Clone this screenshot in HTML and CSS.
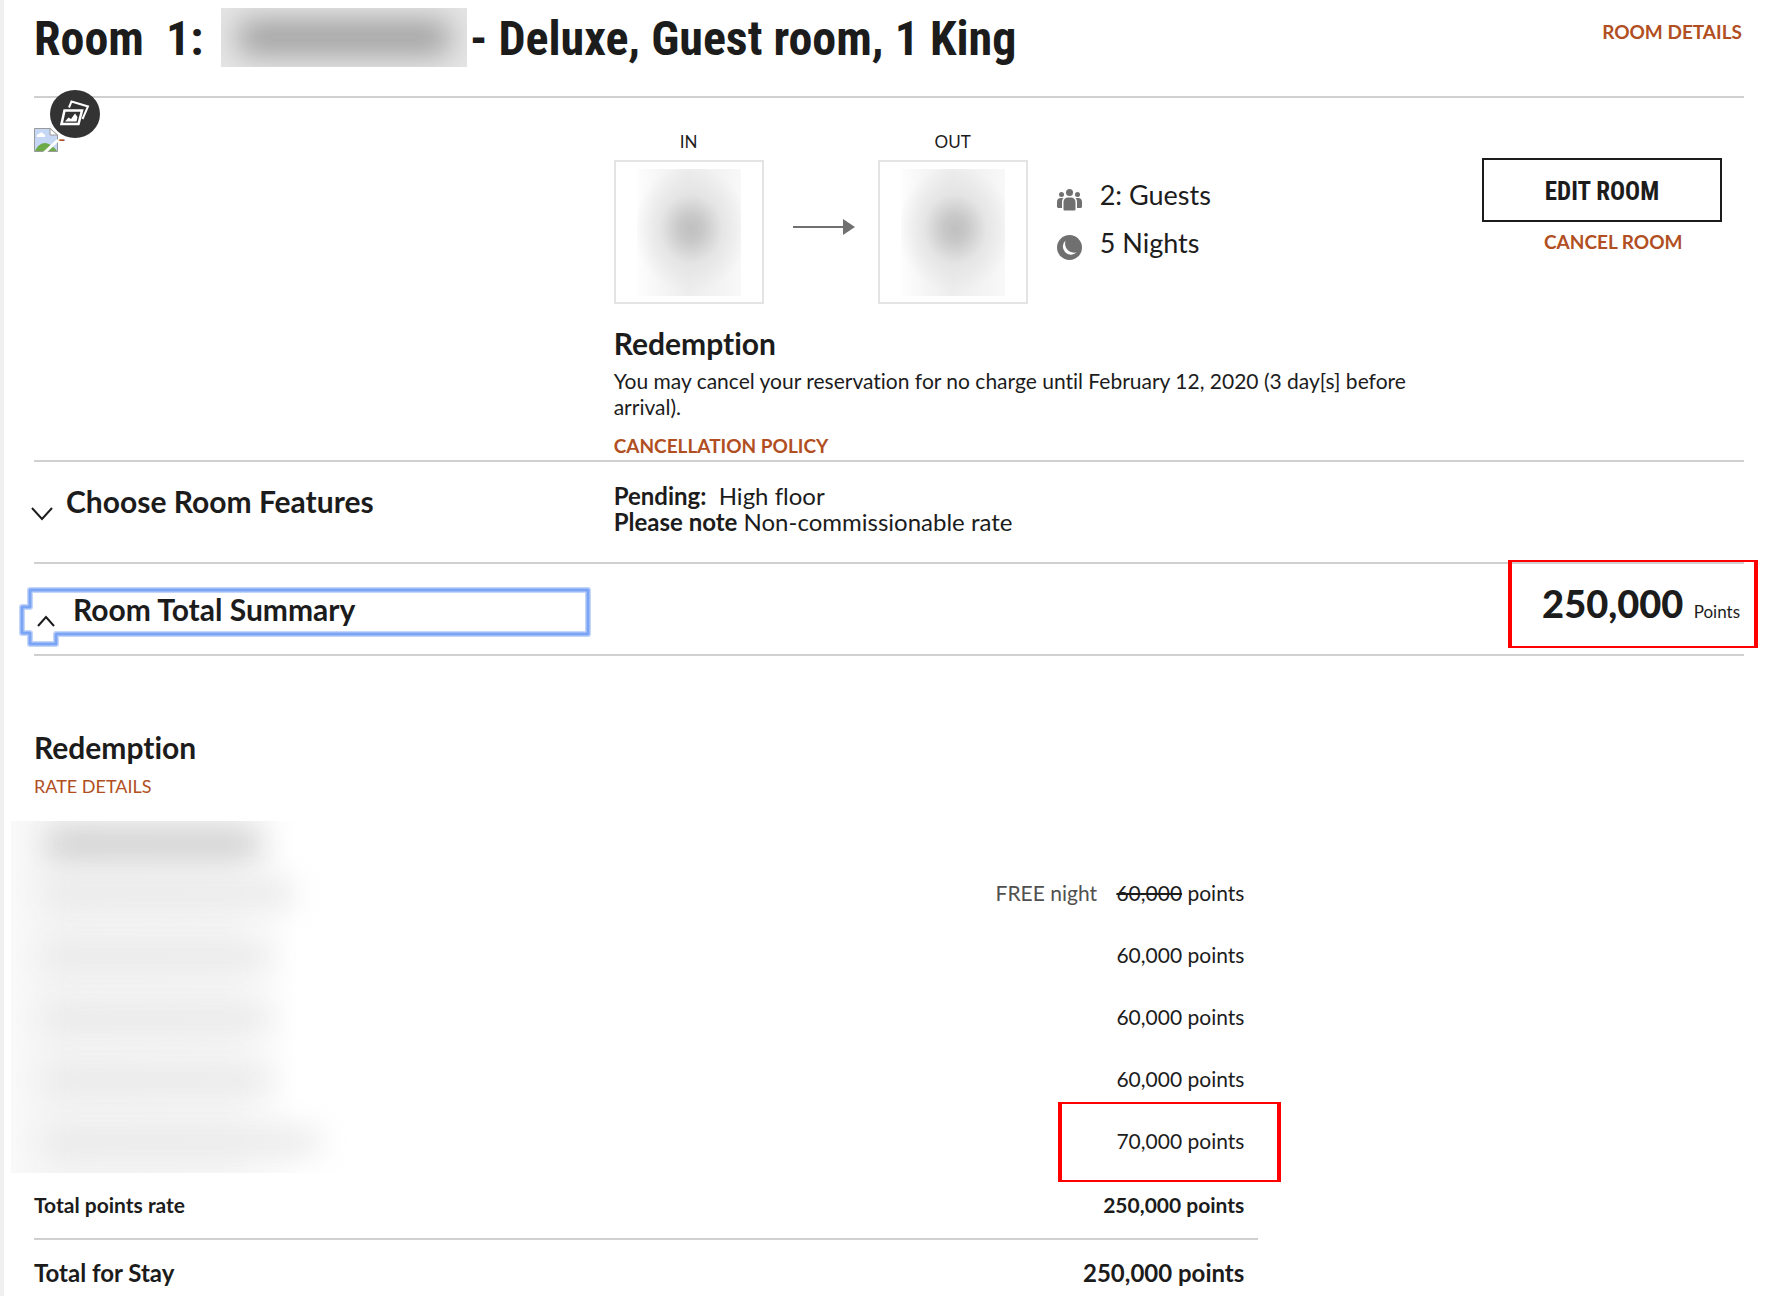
FILE: index.html
```
<!DOCTYPE html>
<html lang="en">
<head>
	<meta charset="utf-8">
	<title>Room 1</title>
	<link rel="stylesheet" href="styles.css">
</head>
<body>
<main class="page">

	<header class="room-header">
		<h1 class="room-title">
			<span class="room-num">Room  1:</span>
			<span class="hidden-name"></span>
			<span>- Deluxe, Guest room, 1 King</span>
		</h1>
		<a class="link" href="#">ROOM DETAILS</a>
	</header>

	<section class="room">
		<div class="photo">
			<svg class="broken" viewBox="0 0 24 24">
				<path d="M.5.5H16L23.500 7V23.500H.5z" fill="#c6d7f5" stroke="#9a9a9a"/>
				<path d="M16 .5V7h7.500z" fill="#fff" stroke="#9a9a9a"/>
				<path d="M3 9a2 2 0 0 1 2-3 2.500 2.500 0 0 1 4.500 0A2 2 0 0 1 11 9z" fill="#fff"/>
				<path d="M1 23c2-5 6-8 10-8s9 4 12 8z" fill="#6dab48"/>
				<path d="M10 25 24 12" stroke="#fff" stroke-width="3"/>
			</svg>
			<a class="photo-dash" href="#">-</a>
			<button class="gallery" aria-label="Photos">
				<svg viewBox="0 0 30 28" fill="none" stroke="#fff" stroke-width="2">
					<path d="M9 7.500l2.500-6L28 6.500 22.500 19"/>
					<path d="M4.500 10.500H22L18.500 24H1.500z" stroke-width="2.500"/>
					<path d="M5 21.500l3.500-4 2.500 1.500 4-5.500 2.500 3.500-1 4.500z" fill="#fff" stroke="none"/>
				</svg>
			</button>
		</div>

		<div class="stay">
			<div class="dates">
				<div class="date">
					<span class="date-label">IN</span>
					<div class="date-box"><div class="date-blur"></div></div>
				</div>
				<svg class="arrow" viewBox="0 0 62 16">
					<path d="M0 8h52" stroke="#707070" stroke-width="2"/>
					<path d="M50 0l12 8-12 8z" fill="#707070"/>
				</svg>
				<div class="date">
					<span class="date-label">OUT</span>
					<div class="date-box"><div class="date-blur"></div></div>
				</div>
				<ul class="counts">
					<li>
						<svg viewBox="0 0 25 25" fill="#707070">
							<circle cx="12.500" cy="5.500" r="3.500"/>
							<circle cx="4.500" cy="7.500" r="2.500"/>
							<circle cx="20.500" cy="7.500" r="2.500"/>
							<path d="M6.500 22.500V15a4.500 4.500 0 0 1 4.500-4.500h3a4.500 4.500 0 0 1 4.500 4.500v7.500a1 1 0 0 1-1 1h-10a1 1 0 0 1-1-1z"/>
							<path d="M5.500 11H4a4 4 0 0 0-4 4v5l1 1h4v-6c0-1.500.5-3 1.500-4zM19.500 11H21a4 4 0 0 1 4 4v5l-1 1h-4v-6c0-1.500-.5-3-1.500-4z"/>
						</svg>
						2: Guests
					</li>
					<li>
						<svg viewBox="0 0 25 25">
							<circle cx="12.500" cy="12.500" r="12.500" fill="#707070"/>
							<path d="M8.500 5.500c-2 8 4 13 11 12A8 8 0 1 1 8.500 5.500z" fill="#fff"/>
						</svg>
						5 Nights
					</li>
				</ul>
			</div>
			<h2>Redemption</h2>
			<p>You may cancel your reservation for no charge until February 12, 2020 (3 day[s] before arrival).</p>
			<a class="link" href="#">CANCELLATION POLICY</a>
		</div>

		<div class="actions">
			<button class="edit">EDIT ROOM</button>
			<a class="link" href="#">CANCEL ROOM</a>
		</div>
	</section>

	<section class="row features">
		<button class="toggle">
			<svg class="chevron" viewBox="0 0 22 14"><path d="M1 1l10 11L21 1"/></svg>
			Choose Room Features
		</button>
		<div class="notes">
			<div><b>Pending:</b>&nbsp; High floor</div>
			<div><b>Please note</b> Non-commissionable rate</div>
		</div>
	</section>

	<section class="row summary">
		<button class="toggle open">
			<svg class="focus" viewBox="0 0 576 64">
				<path class="halo" d="M13 5H571V49H39V59H13V48H5V22H13z"/>
				<path d="M13 5H571V49H39V59H13V48H5V22H13z"/>
			</svg>
			<svg class="chevron" viewBox="0 0 22 14"><path d="M3 11l8-9 8 9"/></svg>
			Room Total Summary
		</button>
		<div class="total"><strong>250,000</strong> <span>Points</span></div>
		<div class="mark mark-total"></div>
	</section>

	<section class="rates">
		<h2>Redemption</h2>
		<a class="link light" href="#">RATE DETAILS</a>
		<div class="nights">
			<table>
				<tr class="hotel"><th></th><td></td></tr>
				<tr><th></th><td><span class="free">FREE night</span> <s>60,000</s> points</td></tr>
				<tr><th></th><td>60,000 points</td></tr>
				<tr><th></th><td>60,000 points</td></tr>
				<tr><th></th><td>60,000 points</td></tr>
				<tr><th></th><td>70,000 points<div class="mark mark-night"></div></td></tr>
				<tr class="points"><th>Total points rate</th><td>250,000 points</td></tr>
				<tr class="grand"><th>Total for Stay</th><td>250,000 points</td></tr>
			</table>
			<!-- hidden hotel name and night labels -->
			<div class="redacted">
				<i class="name"></i>
				<i class="long"></i>
				<i></i>
				<i></i>
				<i></i>
				<i class="longest"></i>
			</div>
		</div>
	</section>

</main>
</body>
</html>
```

FILE: styles.css
```
* {
	box-sizing: border-box;
}
body {
	margin: 0;
	color: #1c1c1c;
	font-family: Lato, "Liberation Sans", sans-serif;
	font-size: 21px;
	line-height: 26px;
	font-variant-ligatures: none;
}
h1, h2, p, ul {
	margin: 0;
	padding: 0;
}
h2 {
	font-size: 30px;
	line-height: 36px;
	font-weight: 700;
}
button {
	font-family: inherit;
	color: inherit;
	background: none;
	border: 0;
	padding: 0;
}
.page {
	min-height: 100vh;
	padding: 0 22px 0 30px;
	border-left: 4px solid #f0f0f0;
	overflow: hidden;
}
.link {
	color: #b14f22;
	font-size: 19px;
	font-weight: 700;
	text-decoration: none;
}
.light {
	font-size: 18px;
	font-weight: 400;
}

/* header */
.room-header {
	display: flex;
	justify-content: space-between;
	align-items: flex-start;
	height: 98px;
	border-bottom: 2px solid #d0d0d0;
}
.room-header .link {
	padding: 19px 2px 0 0;
}
.room-title {
	display: flex;
	align-items: center;
	font-family: "Roboto Condensed", "Liberation Sans Narrow", sans-serif;
	font-size: 48px;
	line-height: 78px;
	white-space: pre;
}
.room-num {
	width: 187px;
}
.hidden-name {
	width: 246px;
	height: 59px;
	margin: 0 3px 4px 0;
	background: #e6e6e6;
	overflow: hidden;
}
.hidden-name::before {
	content: "";
	display: block;
	height: 33px;
	margin: 13px 18px;
	background: #9c9c9c;
	filter: blur(15px);
}

/* room block */
.room {
	display: grid;
	grid-template-columns: 33.9% 1fr 262px;
	border-bottom: 2px solid #d0d0d0;
	padding-bottom: 1px;
}
.photo {
	display: flex;
	align-items: flex-start;
	position: relative;
	padding-top: 30px;
}
.broken {
	width: 24px;
	height: 24px;
}
.photo-dash {
	color: #b14f22;
	text-decoration: none;
	line-height: 22px;
}
.gallery {
	position: absolute;
	left: 16px;
	top: -8px;
	width: 50px;
	height: 48px;
	border-radius: 50%;
	background: #333;
}
.gallery svg {
	width: 30px;
	height: 28px;
	display: block;
	margin: auto;
}
.stay {
	padding: 31px 24px 0 0;
}
.dates {
	display: flex;
	margin-bottom: 21px;
}
.date {
	width: 150px;
	text-align: center;
}
.date-label {
	display: block;
	font-size: 17px;
	margin-bottom: 5px;
}
.date-box {
	height: 144px;
	padding: 7px 21px;
	border: 2px solid #e4e4e4;
}
.date-blur {
	height: 127px;
	background: radial-gradient(ellipse 55% 50% at 52% 47%, #c0c0c0 0, #c8c8c8 20%, rgba(226,226,226,.8) 55%, rgba(240,240,240,0) 100%), linear-gradient(90deg, #fdfdfd, #ededed 50%, #f8f8f8);
}
.arrow {
	width: 62px;
	height: 16px;
	margin: 90px 23px 0 29px;
}
.counts {
	list-style: none;
	margin: 42px 0 0 29px;
	font-size: 27px;
	line-height: 48px;
}
.counts li {
	display: flex;
	align-items: center;
	gap: 18px;
}
.counts svg {
	width: 25px;
	height: 25px;
	margin-top: 8px;
}
.stay p {
	margin: 7px 0 13px;
}
.stay .link {
	display: block;
}
.actions {
	padding: 60px 22px 0 0;
}
.edit {
	width: 100%;
	height: 64px;
	padding-top: 2px;
	border: 2px solid #1c1c1c;
	font: bold 25px "Roboto Condensed", "Liberation Sans Narrow", sans-serif;
}
.actions .link {
	display: block;
	padding: 7px 0 0 62px;
}

/* expandable rows */
.row {
	display: flex;
	position: relative;
	padding-top: 21px;
	border-bottom: 2px solid #d0d0d0;
}
.toggle {
	display: flex;
	flex: 0 0 33.9%;
	position: relative;
	font-size: 30px;
	font-weight: 700;
	line-height: 36px;
	text-align: left;
}
.chevron {
	width: 22px;
	height: 14px;
	margin: 24px 13px 0 -3px;
	fill: none;
	stroke: #1c1c1c;
	stroke-width: 2;
}
.features {
	height: 102px;
	align-items: flex-start;
}
.notes {
	font-size: 24px;
}
.summary {
	height: 92px;
	justify-content: space-between;
	align-items: flex-start;
}
.open {
	margin-top: 6px;
	padding-left: 4px;
	outline: none;
}
.open .chevron {
	margin-right: 16px;
}
.focus {
	position: absolute;
	left: -17px;
	top: -6px;
	width: 576px;
	height: 64px;
	fill: none;
	stroke: #7ba4f4;
	stroke-width: 3;
	stroke-linejoin: round;
}
.focus .halo {
	stroke: #c3d6fa;
	stroke-width: 6;
}
.total {
	padding-right: 4px;
	font-size: 17px;
	line-height: 36px;
}
.total strong {
	font-size: 38px;
	font-weight: 900;
	margin-right: 6px;
}

/* red highlight boxes */
.mark {
	position: absolute;
	border: solid #f00;
	border-width: 2px 4px;
}
.mark-total {
	top: -4px;
	right: -14px;
	width: 250px;
	height: 88px;
}
.mark-night {
	top: -8px;
	right: -23px;
	width: 223px;
	height: 80px;
}

/* nightly rates */
.rates {
	width: 71.6%;
	padding-top: 73px;
}
.rates .link {
	display: block;
	margin: 8px 0 22px;
}
.nights {
	position: relative;
}
table {
	width: 100%;
	border-collapse: collapse;
}
th {
	text-align: left;
	padding: 0;
}
td {
	position: relative;
	height: 62px;
	padding: 0 14px 0 0;
	text-align: right;
}
.hotel td {
	height: 41px;
}
.free {
	color: #505050;
	margin-right: 14px;
}
.points td {
	height: 67px;
	font-weight: 700;
}
.grand {
	border-top: 2px solid #d0d0d0;
	font-size: 24px;
}
.grand th, .grand td {
	height: 46px;
	padding-top: 20px;
	font-weight: 700;
}
.redacted {
	position: absolute;
	left: -23px;
	top: 0;
	width: 350px;
	height: 352px;
	overflow: hidden;
	background: linear-gradient(90deg, #f9f9f9, #f5f5f5 15%, #f6f6f6 60%, #fff 82%);
}
.redacted i {
	display: block;
	width: 226px;
	height: 26px;
	margin: 0 0 36px 32px;
	background: #e8e8e8;
	filter: blur(15px);
}
.redacted .name {
	width: 212px;
	height: 30px;
	margin: 8px 0 22px 36px;
	background: #cfcfcf;
}
.redacted .long {
	width: 250px;
}
.redacted .longest {
	width: 276px;
}
```
